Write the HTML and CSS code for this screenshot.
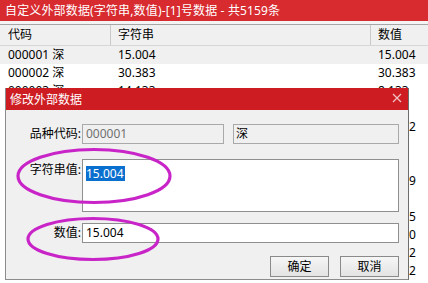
FILE: index.html
```html
<!DOCTYPE html>
<html lang="zh-CN">
<head>
<meta charset="utf-8">
<title>自定义外部数据</title>
<link rel="stylesheet" href="styles.css">
</head>
<body>
<div class="win">
  <div class="wtitle">自定义外部数据(字符串,数值)-[1]号数据 - 共5159条</div>
  <div class="gap"></div>
  <div class="list">
    <div class="row head"><div class="c1">代码</div><div class="c2">字符串</div><div class="c3">数值</div></div>
    <div class="row cur"><div class="c1">000001 深</div><div class="c2">15.004</div><div class="c3">15.004</div></div>
    <div class="row"><div class="c1">000002 深</div><div class="c2">30.383</div><div class="c3">30.383</div></div>
    <div class="row"><div class="c1">000003 深</div><div class="c2">14.133</div><div class="c3">8.133</div></div>
    <div class="row"><div class="c1"></div><div class="c2"></div><div class="c3"></div></div>
    <div class="row"><div class="c1"></div><div class="c2"></div><div class="c3"><span class="tail">2</span></div></div>
    <div class="row"><div class="c1"></div><div class="c2"></div><div class="c3"></div></div>
    <div class="row"><div class="c1"></div><div class="c2"></div><div class="c3"></div></div>
    <div class="row"><div class="c1"></div><div class="c2"></div><div class="c3"><span class="tail">9</span></div></div>
    <div class="row"><div class="c1"></div><div class="c2"></div><div class="c3"></div></div>
    <div class="row"><div class="c1"></div><div class="c2"></div><div class="c3"><span class="tail">5</span></div></div>
    <div class="row"><div class="c1"></div><div class="c2"></div><div class="c3"><span class="tail">0</span></div></div>
    <div class="row"><div class="c1"></div><div class="c2"></div><div class="c3"><span class="tail">2</span></div></div>
    <div class="row"><div class="c1"></div><div class="c2"></div><div class="c3"><span class="tail">2</span></div></div>
  </div>
</div>

<div class="dlg">
  <div class="dtitle">
    <span>修改外部数据</span>
    <svg class="xbtn" width="10" height="10" viewBox="0 0 10 10"><path d="M1 1L9 9M9 1L1 9" stroke="#f3c2c4" stroke-width="1.2" fill="none"/></svg>
  </div>
  <div class="dbody">
    <div class="frow r1">
      <div class="lbl">品种代码:</div>
      <div class="pair"><div class="inp dis">000001</div><div class="inp ro">深</div></div>
    </div>
    <div class="frow r2">
      <div class="lbl top">字符串值:</div>
      <div class="ta"><span class="hl">15.004</span></div>
    </div>
    <div class="frow r3">
      <div class="lbl">数值:</div>
      <div class="inp wide">15.004</div>
    </div>
    <div class="btns"><div class="btn">确定</div><div class="btn">取消</div></div>
  </div>
</div>

<svg class="marks" width="428" height="283" viewBox="0 0 428 283">
  <ellipse cx="94" cy="176" rx="76" ry="26.5" fill="none" stroke="#c824c8" stroke-width="3.2"/>
  <ellipse cx="93" cy="239" rx="65" ry="20.5" fill="none" stroke="#c824c8" stroke-width="3.2"/>
</svg>
</body>
</html>
```

FILE: styles.css
```css
* { box-sizing: border-box; }
html, body { margin: 0; padding: 0; }
body {
  width: 428px;
  height: 283px;
  overflow: hidden;
  background: #ffffff;
  font-family: "Noto Sans", "Noto Sans CJK SC", sans-serif;
  font-size: 12px;
  color: #000;
  position: relative;
}
.win { width: 428px; }
.wtitle {
  height: 21px;
  line-height: 21px;
  background: #d82b2f;
  color: #fff;
  padding-left: 5px;
  white-space: nowrap;
  font-size: 12px;
  letter-spacing: 0.15px;
}
.gap { height: 3px; background: #f4f4f4; }
.row {
  display: flex;
  height: 18px;
  line-height: 18px;
  white-space: nowrap;
}
.row.head {
  height: 22px;
  line-height: 20px;
  background: #f0f0f0;
  border-top: 1px solid #a6a6a6;
  border-bottom: 1px solid #d6d6d6;
}
.row.cur { background: #f0f0f0; }
.c1 { width: 111px; padding-left: 8px; flex: none; }
.c2 { width: 260px; padding-left: 7px; flex: none; }
.c3 { flex: 1; padding-left: 7px; }
.tail { display: inline-block; margin-left: 31px; }
.head .c1, .head .c2 { border-right: 1px solid #c9c9c9; }

.dlg {
  position: absolute;
  left: 5px;
  top: 88px;
  width: 404px;
  height: 192px;
  background: #f0f0f0;
  border-left: 1px solid #8c8c8c;
  border-right: 1px solid #6c6c6c;
  border-bottom: 1px solid #8c8c8c;
}
.dtitle {
  height: 22px;
  background: #cd1d23;
  color: #fff;
  display: flex;
  align-items: center;
  justify-content: space-between;
  padding: 0 6px 0 4px;
  font-size: 12px;
}
.xbtn { display: block; margin-top: -2px; }
.dbody { padding: 14px 9px 0 0; }
.frow { display: flex; }
.lbl {
  width: 76px;
  flex: none;
  text-align: right;
  padding-right: 1px;
  line-height: 20px;
  white-space: nowrap;
}
.lbl.top { line-height: 17px; padding-top: 2px; }
.pair { flex: 1; display: flex; gap: 9px; }
.inp {
  height: 20px;
  line-height: 18px;
  border: 1px solid #8f8f8f;
  background: #fff;
  padding-left: 3px;
}
.inp.dis { width: 142px; background: #f0f0f0; color: #707070; border-color: #a9a9a9; }
.inp.ro { flex: 1; background: #f0f0f0; border-color: #a9a9a9; padding-left: 2px; }
.inp.wide { flex: 1; }
.r2 { margin-top: 15px; }
.ta {
  flex: 1;
  height: 53px;
  background: #fff;
  border: 1px solid #8f8f8f;
  padding: 5px 0 0 3px;
}
.hl {
  display: inline-block;
  background: #0a70d0;
  color: #fff;
  height: 15px;
  line-height: 15px;
  padding: 0 1px 0 0;
}
.r3 { margin-top: 11px; }
.btns {
  margin-top: 13px;
  display: flex;
  justify-content: flex-end;
  gap: 11px;
}
.btn {
  width: 59px;
  height: 21px;
  line-height: 19px;
  text-align: center;
  border: 1px solid #8a8a8a;
  background: linear-gradient(#f6f6f6, #e3e3e3);
}
.marks {
  position: absolute;
  left: 0;
  top: 0;
  pointer-events: none;
}
```
